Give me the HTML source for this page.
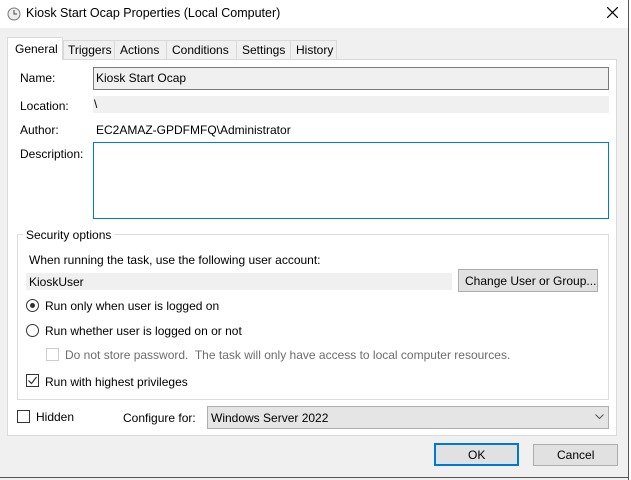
<!DOCTYPE html>
<html><head><style>
*{box-sizing:border-box;margin:0;padding:0}
body{width:631px;height:480px;position:relative;overflow:hidden;background:#f0f0f0;font-family:"Liberation Sans",sans-serif;font-size:12px;color:#000}
.a{position:absolute}
.t{white-space:nowrap}
</style></head><body>
<div class="a" style="left:628px;top:0;width:3px;height:480px;background:#fff"></div>
<div class="a" style="left:628px;top:0;width:1px;height:480px;background:#555"></div>
<div class="a" style="left:0;top:477px;width:629px;height:1px;background:#555"></div>
<div class="a" style="left:0;top:0;width:628px;height:28px;background:#fff"></div>
<svg class="a" style="left:7px;top:7px" width="14" height="14"><circle cx="7" cy="7" r="6" fill="#eee" stroke="#777"/><path d="M7 3V7H10" stroke="#444" fill="none"/></svg>
<div class="a t" style="left:26px;top:6px;font-size:12.5px">Kiosk Start Ocap Properties (Local Computer)</div>
<svg class="a" style="left:607px;top:7px" width="11" height="11"><path d="M0 0L11 11M11 0L0 11" stroke="#000" stroke-width="1.2"/></svg>
<!-- panel -->
<div class="a" style="left:7px;top:59px;width:610px;height:377px;background:#fff;border:1px solid #d9d9d9"></div>
<!-- tabs -->
<div class="a" style="left:7px;top:37px;width:56px;height:23px;background:#fff;border:1px solid #d9d9d9;border-bottom:none"></div>
<div class="a t" style="left:15px;top:42px">General</div>
<div class="a" style="left:63px;top:40px;width:274px;height:19px;background:#f0f0f0;border:1px solid #d9d9d9;border-bottom:none"></div>
<div class="a" style="left:114px;top:40px;width:1px;height:19px;background:#d9d9d9"></div>
<div class="a" style="left:166px;top:40px;width:1px;height:19px;background:#d9d9d9"></div>
<div class="a" style="left:236px;top:40px;width:1px;height:19px;background:#d9d9d9"></div>
<div class="a" style="left:290px;top:40px;width:1px;height:19px;background:#d9d9d9"></div>
<div class="a t" style="left:68px;top:43px">Triggers</div>
<div class="a t" style="left:120px;top:43px">Actions</div>
<div class="a t" style="left:172px;top:43px">Conditions</div>
<div class="a t" style="left:242px;top:43px">Settings</div>
<div class="a t" style="left:296px;top:43px">History</div>
<!-- fields -->
<div class="a t" style="left:20px;top:71px">Name:</div>
<div class="a" style="left:93px;top:67px;width:516px;height:23px;background:#f0f0f0;border:1px solid #7a7a7a"></div>
<div class="a t" style="left:96px;top:71px">Kiosk Start Ocap</div>
<div class="a t" style="left:20px;top:99px">Location:</div>
<div class="a" style="left:93px;top:96px;width:516px;height:17px;background:#f0f0f0"></div>
<div class="a t" style="left:94px;top:97px">\</div>
<div class="a t" style="left:20px;top:123px">Author:</div>
<div class="a t" style="left:96px;top:123px">EC2AMAZ-GPDFMFQ\Administrator</div>
<div class="a t" style="left:20px;top:147px">Description:</div>
<div class="a" style="left:93px;top:142px;width:516px;height:77px;border:1px solid #0078d7"></div>
<!-- group -->
<div class="a" style="left:17px;top:234px;width:592px;height:166px;border:1px solid #dcdcdc"></div>
<div class="a t" style="left:23px;top:228px;background:#fff;padding:0 3px">Security options</div>
<div class="a t" style="left:29px;top:253px">When running the task, use the following user account:</div>
<div class="a" style="left:26px;top:273px;width:426px;height:17px;background:#f0f0f0"></div>
<div class="a t" style="left:29px;top:275px">KioskUser</div>
<div class="a" style="left:458px;top:269px;width:140px;height:23px;background:#e1e1e1;border:1px solid #adadad"></div>
<div class="a t" style="left:465px;top:274px">Change User or Group...</div>
<div class="a" style="left:26px;top:299px;width:13px;height:13px;border:1px solid #333;border-radius:50%"></div>
<div class="a" style="left:30px;top:303px;width:5px;height:5px;background:#333;border-radius:50%"></div>
<div class="a t" style="left:45px;top:299px">Run only when user is logged on</div>
<div class="a" style="left:26px;top:324px;width:13px;height:13px;border:1px solid #333;border-radius:50%"></div>
<div class="a t" style="left:45px;top:324px">Run whether user is logged on or not</div>
<div class="a" style="left:46px;top:348px;width:13px;height:13px;border:1px solid #ccc"></div>
<div class="a t" style="left:65px;top:348px;color:#6d6d6d">Do not store password.&nbsp; The task will only have access to local computer resources.</div>
<div class="a" style="left:26px;top:374px;width:13px;height:13px;border:1px solid #333"></div>
<svg class="a" style="left:27px;top:375px" width="11" height="11"><path d="M1.5 5.5L4.5 8.5L9.5 2" stroke="#333" fill="none" stroke-width="1.2"/></svg>
<div class="a t" style="left:45px;top:375px">Run with highest privileges</div>
<!-- bottom -->
<div class="a" style="left:17px;top:410px;width:13px;height:13px;border:1px solid #333"></div>
<div class="a t" style="left:36px;top:410px">Hidden</div>
<div class="a t" style="left:123px;top:411px">Configure for:</div>
<div class="a" style="left:207px;top:406px;width:402px;height:23px;background:#e5e5e5;border:1px solid #adadad"></div>
<div class="a t" style="left:211px;top:411px">Windows Server 2022</div>
<svg class="a" style="left:595px;top:414px" width="9" height="6"><path d="M0.5 0.5L4.5 4.5L8.5 0.5" stroke="#555" fill="none"/></svg>
<div class="a" style="left:434px;top:443px;width:85px;height:23px;background:#e1e1e1;border:2px solid #0078d7"></div>
<div class="a t" style="left:468px;top:448px">OK</div>
<div class="a" style="left:533px;top:444px;width:85px;height:22px;background:#e1e1e1;border:1px solid #adadad"></div>
<div class="a t" style="left:557px;top:448px">Cancel</div>
</body></html>
